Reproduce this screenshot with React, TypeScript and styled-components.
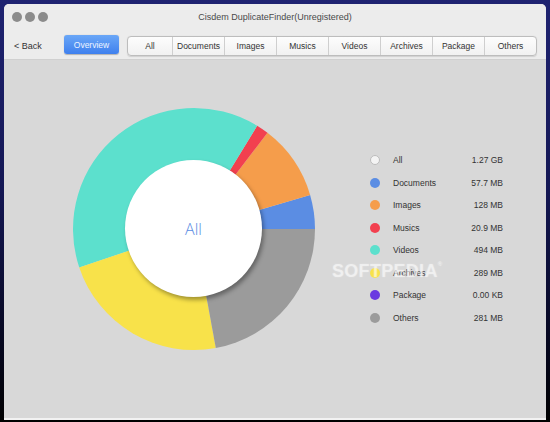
import React from "react";
import styled, { createGlobalStyle } from "styled-components";

type Slice = { label: string; color: string; size: string; mb: number };

const slices: Slice[] = [
  { label: "Documents", color: "#5b8de3", size: "57.7 MB", mb: 57.7 },
  { label: "Images", color: "#f59d4b", size: "128 MB", mb: 128 },
  { label: "Musics", color: "#f2404f", size: "20.9 MB", mb: 20.9 },
  { label: "Videos", color: "#5ce0cd", size: "494 MB", mb: 494 },
  { label: "Archives", color: "#f8e24a", size: "289 MB", mb: 289 },
  { label: "Package", color: "#6a3be0", size: "0.00 KB", mb: 0 },
  { label: "Others", color: "#9b9b9b", size: "281 MB", mb: 281 },
];

const tabs = ["All", "Documents", "Images", "Musics", "Videos", "Archives", "Package", "Others"];

const GlobalStyle = createGlobalStyle`
  html, body {
    margin: 0;
    padding: 0;
    height: 100%;
  }
  body {
    background: linear-gradient(to bottom, #1f2371 0%, #141754 45%, #05061a 85%, #000 100%);
    font-family: "Liberation Sans", Arial, sans-serif;
    overflow: hidden;
  }
`;

const Stage = styled.div`
  padding: 4px 4px 0 4px;
`;

const Window = styled.div`
  width: 542px;
  height: 414px;
  display: flex;
  flex-direction: column;
  border-radius: 5px 5px 0 0;
  overflow: hidden;
  background: #d8d8d8;
  border-bottom: 2px solid #f2f2f2;
`;

const Chrome = styled.div`
  background: #ececec;
  border-bottom: 1px solid #d0d0d0;
  display: flex;
  flex-direction: column;
`;

const TitleBar = styled.div`
  height: 26px;
  display: flex;
  align-items: center;
  padding-left: 5px;
  position: relative;
`;

const Light = styled.span`
  width: 10px;
  height: 10px;
  border-radius: 50%;
  background: #8b8b8b;
  margin-left: 3px;
`;

const Title = styled.div`
  position: absolute;
  left: 0;
  right: 0;
  text-align: center;
  font-size: 9px;
  color: #4a4a4a;
  pointer-events: none;
`;

const Toolbar = styled.div`
  height: 24px;
  display: flex;
  align-items: flex-start;
  padding: 5px 0 0 10px;
`;

const Back = styled.div`
  font-size: 9px;
  color: #333;
  margin-top: 6px;
  width: 50px;
`;

const Overview = styled.div`
  width: 55px;
  height: 19px;
  border-radius: 3px;
  background: linear-gradient(to bottom, #6aa7f7, #3f80ee);
  box-shadow: 0 0.5px 1px rgba(0, 0, 0, 0.25);
  color: #eef4ff;
  font-size: 8.5px;
  display: flex;
  align-items: center;
  justify-content: center;
`;

const Segments = styled.div`
  margin-left: 8px;
  margin-top: 1px;
  display: flex;
  height: 18px;
  border: 1px solid #bdbdbd;
  border-radius: 4px;
  background: linear-gradient(to bottom, #fdfdfd, #f1f1f1);
  box-shadow: 0 0.5px 1px rgba(0, 0, 0, 0.12);
  overflow: hidden;
`;

const Segment = styled.div<{ $first?: boolean }>`
  width: 51px;
  display: flex;
  align-items: center;
  justify-content: center;
  font-size: 8.5px;
  color: #333;
  border-left: ${(p) => (p.$first ? "none" : "1px solid #cfcfcf")};
  &:first-child {
    width: 44px;
  }
`;

const Content = styled.div`
  flex: 1;
  position: relative;
  display: flex;
  align-items: flex-start;
  padding: 47px 0 0 68px;
`;

const ChartBox = styled.div`
  position: relative;
  width: 244px;
  height: 244px;
`;

const Hole = styled.div`
  position: absolute;
  left: 53px;
  top: 53px;
  width: 137px;
  height: 137px;
  border-radius: 50%;
  background: #fff;
  box-shadow: 2px 3px 4px rgba(0, 0, 0, 0.35);
  display: flex;
  align-items: center;
  justify-content: center;
  color: #5b8de3;
  font-family: "Open Sans", "Liberation Sans", sans-serif;
  font-size: 16px;
  font-weight: 300;
`;

const Legend = styled.div`
  margin-left: 54px;
  margin-top: 42px;
  display: flex;
  flex-direction: column;
`;

const Row = styled.div`
  height: 22.5px;
  display: grid;
  grid-template-columns: 23px 56px 54px;
  align-items: center;
  font-size: 8.5px;
  color: #333;
`;

const Dot = styled.span<{ $color: string; $outline?: boolean }>`
  width: 10px;
  height: 10px;
  border-radius: 50%;
  background: ${(p) => p.$color};
  box-sizing: border-box;
  border: ${(p) => (p.$outline ? "1px solid #bdbdbd" : "none")};
`;

const Size = styled.span`
  text-align: right;
`;

const Watermark = styled.div`
  position: absolute;
  left: 328px;
  top: 201px;
  font-size: 18px;
  font-weight: bold;
  letter-spacing: 0.3px;
  color: rgba(255, 255, 255, 0.5);
  text-shadow: 0 0 2px rgba(255, 255, 255, 0.3);
  pointer-events: none;
  sup {
    font-size: 6px;
    vertical-align: top;
  }
`;

function Donut() {
  const total = slices.reduce((s, x) => s + x.mb, 0);
  const cx = 122;
  const cy = 122;
  const r = 121;
  const pt = (a: number) => `${cx + r * Math.cos(a)} ${cy - r * Math.sin(a)}`;
  let start = 0;
  const paths = slices
    .filter((s) => s.mb > 0)
    .map((s) => {
      const sweep = (s.mb / total) * Math.PI * 2;
      const end = start + sweep;
      const large = sweep > Math.PI ? 1 : 0;
      const d = `M ${cx} ${cy} L ${pt(start)} A ${r} ${r} 0 ${large} 0 ${pt(end)} Z`;
      start = end;
      return <path key={s.label} d={d} fill={s.color} />;
    });
  return (
    <svg width="244" height="244" viewBox="0 0 244 244">
      {paths}
    </svg>
  );
}

export default function App() {
  return (
    <>
      <GlobalStyle />
      <Stage>
        <Window>
          <Chrome>
            <TitleBar>
              <Light />
              <Light />
              <Light />
              <Title>Cisdem DuplicateFinder(Unregistered)</Title>
            </TitleBar>
            <Toolbar>
              <Back>&lt; Back</Back>
              <Overview>Overview</Overview>
              <Segments>
                {tabs.map((t, i) => (
                  <Segment key={t} $first={i === 0}>
                    {t}
                  </Segment>
                ))}
              </Segments>
            </Toolbar>
          </Chrome>
          <Content>
            <ChartBox>
              <Donut />
              <Hole>All</Hole>
            </ChartBox>
            <Legend>
              <Row>
                <Dot $color="#f4f4f4" $outline />
                <span>All</span>
                <Size>1.27 GB</Size>
              </Row>
              {slices.map((s) => (
                <Row key={s.label}>
                  <Dot $color={s.color} />
                  <span>{s.label}</span>
                  <Size>{s.size}</Size>
                </Row>
              ))}
            </Legend>
            <Watermark>
              SOFTPEDIA<sup>®</sup>
            </Watermark>
          </Content>
        </Window>
      </Stage>
    </>
  );
}
